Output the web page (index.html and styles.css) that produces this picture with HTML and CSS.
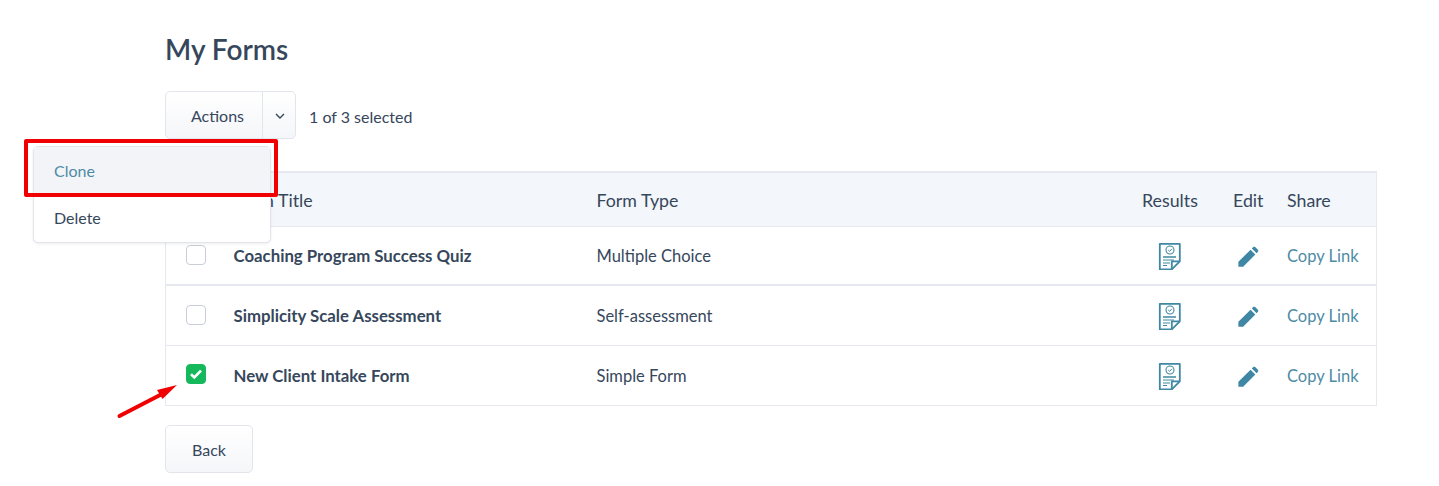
FILE: index.html
```html
<!DOCTYPE html>
<html lang="en">
<head>
    <meta charset="UTF-8">
    <meta name="viewport" content="width=device-width, initial-scale=1.0">
    <title>My Forms</title>
    <link rel="stylesheet" href="styles.css">
</head>
<body>
    <div class="container">
        <h2>My Forms</h2>
        <div class="toolbar">
            <div class="split-button">
                <button class="split-main">Actions</button>
                <button class="split-caret">
                    <svg width="12" height="8" viewBox="0 0 12 8"><path d="M2 2l4 4 4-4" fill="none" stroke="#36475c" stroke-width="1.4"/></svg>
                </button>
            </div>
            <span class="selected-count">1 of 3 selected</span>
        </div>
        <table class="forms">
            <tr>
                <th class="col-check"></th>
                <th class="col-title">Form Title</th>
                <th class="col-type">Form Type</th>
                <th class="col-results">Results</th>
                <th class="col-edit">Edit</th>
                <th class="col-share">Share</th>
            </tr>
            <tr class="row-first">
                <td class="col-check"><span class="check"></span></td>
                <td class="col-title">Coaching Program Success Quiz</td>
                <td>Multiple Choice</td>
                <td class="col-results"><svg class="icon" width="24" height="28" viewBox="0 0 24 28"><use href="#doc"/></svg></td>
                <td class="col-edit"><svg class="icon" width="22" height="22" viewBox="0 0 24 24"><use href="#pencil"/></svg></td>
                <td class="col-share"><a href="#">Copy Link</a></td>
            </tr>
            <tr>
                <td class="col-check"><span class="check"></span></td>
                <td class="col-title">Simplicity Scale Assessment</td>
                <td>Self-assessment</td>
                <td class="col-results"><svg class="icon" width="24" height="28" viewBox="0 0 24 28"><use href="#doc"/></svg></td>
                <td class="col-edit"><svg class="icon" width="22" height="22" viewBox="0 0 24 24"><use href="#pencil"/></svg></td>
                <td class="col-share"><a href="#">Copy Link</a></td>
            </tr>
            <tr>
                <td class="col-check"><span class="check checked">
                    <svg width="14" height="12" viewBox="0 0 14 12"><path d="M2 6.200l3.300 3.200L12 2.600" fill="none" stroke="#fff" stroke-width="2.600"/></svg>
                </span></td>
                <td class="col-title">New Client Intake Form</td>
                <td>Simple Form</td>
                <td class="col-results"><svg class="icon" width="24" height="28" viewBox="0 0 24 28"><use href="#doc"/></svg></td>
                <td class="col-edit"><svg class="icon" width="22" height="22" viewBox="0 0 24 24"><use href="#pencil"/></svg></td>
                <td class="col-share"><a href="#">Copy Link</a></td>
            </tr>
        </table>
        <button class="back">Back</button>
    </div>

    <div class="menu">
        <a class="menu-item active" href="#">Clone</a>
        <a class="menu-item" href="#">Delete</a>
    </div>

    <!-- annotations drawn over the screenshot -->
    <div class="red-box"></div>
    <svg class="red-arrow" width="70" height="40" viewBox="0 0 70 40">
        <path d="M3.500 34L47 11.500" stroke="#f00000" stroke-width="4" stroke-linecap="round"/>
        <path d="M61 3L41 8l5.500 9z" fill="#f00000"/>
    </svg>

    <svg width="0" height="0" class="defs">
        <symbol id="doc" viewBox="0 0 24 28">
            <path d="M2.800 1.800h20v17.500l-8 8h-12z" fill="none" stroke="#3f87a3" stroke-width="1.800" stroke-linejoin="round"/>
            <path d="M22.800 19.300h-8v8" fill="none" stroke="#3f87a3" stroke-width="1.800" stroke-linejoin="round"/>
            <circle cx="13" cy="8" r="4" fill="none" stroke="#3f87a3" stroke-width="1.100"/>
            <path d="M11.200 8l1.400 1.400 2.300-2.600" fill="none" stroke="#3f87a3" stroke-width="1"/>
            <path d="M6 15h13" stroke="#3f87a3" stroke-width="1.500"/>
            <path d="M6 18h11M6 21h7M6 23.500h4" stroke="#3f87a3" stroke-width="1.200"/>
        </symbol>
        <symbol id="pencil" viewBox="0 0 24 24">
            <path d="M1.500 22.500v-5.200L14.800 4l5.200 5.200L6.700 22.500zM16.200 2.700l1.500-1.500c.6-.6 1.500-.6 2.100 0l3 3c.6.6.6 1.500 0 2.100l-1.500 1.500z" fill="#3f87a3"/>
        </symbol>
    </svg>
</body>
</html>
```

FILE: styles.css
```css
body {
    font-family: "Lato", "Noto Sans", sans-serif;
    font-size: 16px;
    color: #36475c;
    background-color: #fff;
    margin: 0;
    padding: 0;
}
.container {
    margin: 0 62px 0 165px;
    padding-top: 32px;
}
h2 {
    font-size: 28px;
    line-height: 34px;
    font-weight: 600;
    margin: 0 0 25px;
}
.toolbar {
    display: flex;
    align-items: center;
    height: 48px;
    margin-bottom: 32px;
}
.split-button {
    display: flex;
    height: 48px;
    width: 131px;
    box-sizing: border-box;
    border: 1px solid #e2e5ec;
    border-radius: 5px;
    background: linear-gradient(#fff, #f5f6f9);
}
.split-button button {
    border: none;
    background: none;
    font: inherit;
    color: inherit;
    padding: 0;
}
.split-main {
    width: 97px;
    text-align: left;
    padding-left: 25px !important;
    border-right: 1px solid #e2e5ec !important;
}
.split-caret {
    flex: 1;
    display: flex;
    align-items: center;
    justify-content: center;
}
.split-caret svg {
    margin: 2px 0 0 1px;
}
.selected-count {
    margin-left: 13px;
    padding-top: 2px;
}
.forms {
    width: 100%;
    border-collapse: collapse;
    border: 1px solid #e6e8ef;
}
.forms th {
    background-color: #f3f6fa;
    font-size: 17.800px;
    font-weight: 400;
    text-align: left;
    height: 53px;
    padding: 0;
    border-top: 2px solid #e6e8ef;
    border-bottom: 1px solid #e6e8ef;
}
.forms td {
    height: 59px;
    padding: 0;
    font-size: 16.500px;
    border-bottom: 1px solid #e6e8ef;
}
.forms .row-first td {
    height: 57px;
    border-bottom-width: 2px;
}
.col-check {
    width: 68px;
    padding-left: 20px !important;
    box-sizing: border-box;
}
.forms .col-title {
    width: 363px;
}
.forms td.col-title {
    font-size: 16.800px;
    font-weight: 700;
}
.col-results {
    width: 91px;
}
.col-edit {
    width: 54px;
}
.col-share {
    width: 89px;
}
td.col-results .icon {
    display: block;
    margin-left: 15px;
}
td.col-edit .icon {
    display: block;
    margin: 3px 0 0 4px;
}
.col-share a {
    color: #4e8ba5;
    text-decoration: none;
}
.check {
    display: block;
    width: 20px;
    height: 20px;
    margin-bottom: 2px;
    box-sizing: border-box;
    border: 1px solid #c9cdd8;
    border-radius: 4px;
    background: #fff;
}
.check.checked {
    display: flex;
    align-items: center;
    justify-content: center;
    margin-bottom: 3px;
    background: #16b85c;
    border-color: #16b85c;
}
.back {
    display: block;
    margin-top: 19px;
    width: 88px;
    height: 48px;
    border: 1px solid #e2e5ec;
    border-radius: 5px;
    background: linear-gradient(#fff, #f5f6f9);
    font: inherit;
    color: inherit;
}
.menu {
    position: absolute;
    left: 33px;
    top: 146px;
    width: 238px;
    box-sizing: border-box;
    padding-bottom: 1px;
    background: #fff;
    border: 1px solid #e2e5ec;
    border-radius: 5px;
    box-shadow: 0 1px 3px rgba(0, 0, 0, 0.08);
}
.menu-item {
    display: block;
    height: 47px;
    line-height: 47px;
    padding-left: 20px;
    color: #36475c;
    text-decoration: none;
}
.menu-item.active {
    background-color: #f3f4f8;
    color: #4e8ba5;
}
.red-box {
    position: absolute;
    left: 24px;
    top: 139px;
    width: 254px;
    height: 58px;
    box-sizing: border-box;
    border: 4px solid #f00000;
    border-radius: 2px;
}
.red-arrow {
    position: absolute;
    left: 116px;
    top: 382px;
}
.defs {
    position: absolute;
}
```
